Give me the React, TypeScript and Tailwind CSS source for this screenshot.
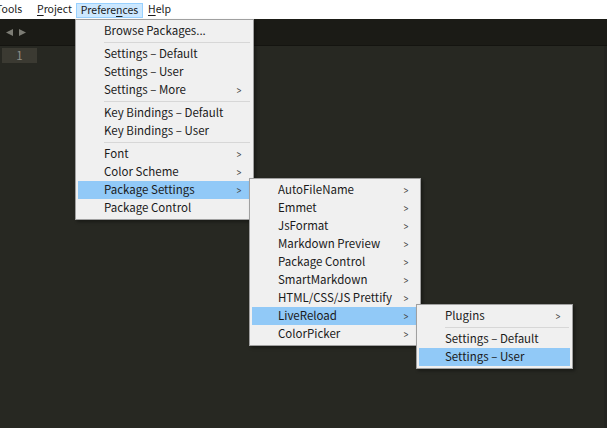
import React from 'react';

type Item = { label?: string; sub?: boolean; active?: boolean; sep?: boolean };

const prefs: Item[] = [
  { label: 'Browse Packages...' },
  { sep: true },
  { label: 'Settings – Default' },
  { label: 'Settings – User' },
  { label: 'Settings – More', sub: true },
  { sep: true },
  { label: 'Key Bindings – Default' },
  { label: 'Key Bindings – User' },
  { sep: true },
  { label: 'Font', sub: true },
  { label: 'Color Scheme', sub: true },
  { label: 'Package Settings', sub: true, active: true },
  { label: 'Package Control' },
];

const packages: Item[] = [
  { label: 'AutoFileName', sub: true },
  { label: 'Emmet', sub: true },
  { label: 'JsFormat', sub: true },
  { label: 'Markdown Preview', sub: true },
  { label: 'Package Control', sub: true },
  { label: 'SmartMarkdown', sub: true },
  { label: 'HTML/CSS/JS Prettify', sub: true },
  { label: 'LiveReload', sub: true, active: true },
  { label: 'ColorPicker', sub: true },
];

const liveReload: Item[] = [
  { label: 'Plugins', sub: true },
  { sep: true },
  { label: 'Settings – Default' },
  { label: 'Settings – User', active: true },
];

function Menu({ items, className }: { items: Item[]; className: string }) {
  return (
    <div
      className={`absolute bg-[#f0f0f0] border border-[#a0a0a0] py-[2px] px-[2px] shadow-[2px_2px_3px_rgba(0,0,0,0.35)] ${className}`}
    >
      {items.map((it, i) =>
        it.sep ? (
          <div key={i} className="h-[5px] flex items-center pl-[26px] pr-[1px]">
            <div className="h-px w-full bg-[#d7d7d7]" />
          </div>
        ) : (
          <div
            key={i}
            className={`h-[18px] flex items-center pl-[26px] pr-[9px] text-[#1a1a1a] ${it.active ? 'bg-[#91c9f7]' : ''}`}
          >
            <span className="flex-1 whitespace-nowrap">{it.label}</span>
            {it.sub && <span className="text-[11px] text-[#444] scale-x-75">&gt;</span>}
          </div>
        ),
      )}
    </div>
  );
}

export default function App() {
  return (
    <div
      className="relative w-[607px] h-[428px] overflow-hidden bg-[#272822] text-[11.5px] leading-none"
      style={{ fontFamily: '"Noto Sans CJK SC", "Noto Sans", sans-serif' }}
    >
      {/* menu bar */}
      <div className="h-[19px] bg-white flex items-stretch text-[#1a1a1a] text-[10.5px]">
        <div className="flex items-center w-[41px] shrink-0 -ml-[4px]">Tools</div>
        <div className="flex items-center w-[39px] shrink-0">
          <span className="underline underline-offset-2">P</span>roject
        </div>
        <div className="flex items-center mt-[3px] h-[15px] w-[67px] shrink-0 justify-center bg-[#cce8ff] border border-[#99d1ff]">
          Prefere<span className="underline underline-offset-2">n</span>ces
        </div>
        <div className="flex items-center pl-[5px]">
          <span className="underline underline-offset-2">H</span>elp
        </div>
      </div>

      {/* tab bar */}
      <div className="h-[27px] bg-[#1b1b16] border-b border-[#141410] flex items-center pl-[6px] gap-[6px]">
        <svg width="7" height="7" viewBox="0 0 7 7">
          <path d="M7 0 L0 3.5 L7 7 Z" fill="#7c7c74" />
        </svg>
        <svg width="7" height="7" viewBox="0 0 7 7">
          <path d="M0 0 L7 3.5 L0 7 Z" fill="#7c7c74" />
        </svg>
      </div>

      {/* editor */}
      <div className="flex pt-[2px] pl-[2px] border-r-[3px] border-[#232420] h-full">
        <div className="w-[35px] h-[15px] bg-[#3b3a32] text-[#8f908a] flex items-center justify-center">
          1
        </div>
      </div>

      <Menu items={prefs} className="left-[75px] top-[19px] w-[179px]" />
      <Menu items={packages} className="left-[249px] top-[178px] w-[172px]" />
      <Menu items={liveReload} className="left-[416px] top-[304px] w-[157px]" />
    </div>
  );
}
